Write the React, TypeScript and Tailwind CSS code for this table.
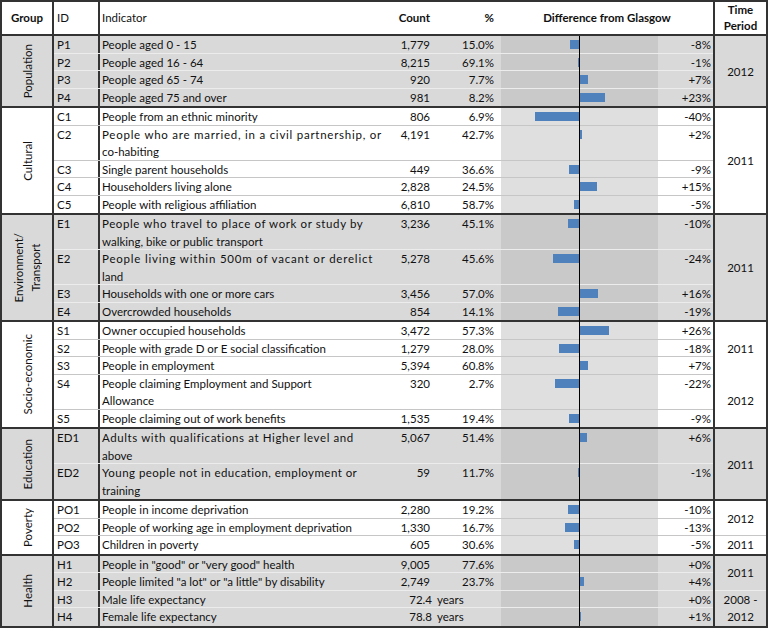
type Row = {
  id: string;
  label: string[];
  count: string;
  pct: string;
  diff: number;
  years?: boolean;
  spread?: string;
};

type Period = { text: string[]; grow: string; line?: boolean };

type Group = { name: string[]; shade: boolean; rows: Row[]; periods: Period[] };

const groups: Group[] = [
  {
    name: ["Population"],
    shade: true,
    rows: [
      { id: "P1", label: ["People aged 0 - 15"], count: "1,779", pct: "15.0%", diff: -8 },
      { id: "P2", label: ["People aged 16 - 64"], count: "8,215", pct: "69.1%", diff: -1 },
      { id: "P3", label: ["People aged 65 - 74"], count: "920", pct: "7.7%", diff: 7 },
      { id: "P4", label: ["People aged 75 and over"], count: "981", pct: "8.2%", diff: 23 },
    ],
    periods: [{ text: ["2012"], grow: "flex-[1]" }],
  },
  {
    name: ["Cultural"],
    shade: false,
    rows: [
      { id: "C1", label: ["People from an ethnic minority"], count: "806", pct: "6.9%", diff: -40 },
      {
        id: "C2",
        label: ["People who are married, in a civil partnership, or", "co-habiting"],
        count: "4,191",
        pct: "42.7%",
        diff: 2,
        spread: "tracking-[0.75px]",
      },
      { id: "C3", label: ["Single parent households"], count: "449", pct: "36.6%", diff: -9 },
      { id: "C4", label: ["Householders living alone"], count: "2,828", pct: "24.5%", diff: 15 },
      { id: "C5", label: ["People with religious affiliation"], count: "6,810", pct: "58.7%", diff: -5 },
    ],
    periods: [{ text: ["2011"], grow: "flex-[1]" }],
  },
  {
    name: ["Environment/", "Transport"],
    shade: true,
    rows: [
      {
        id: "E1",
        label: ["People who travel to place of work or study by", "walking, bike or public transport"],
        count: "3,236",
        pct: "45.1%",
        diff: -10,
        spread: "tracking-[0.6px]",
      },
      {
        id: "E2",
        label: ["People living within 500m of vacant or derelict", "land"],
        count: "5,278",
        pct: "45.6%",
        diff: -24,
        spread: "tracking-[0.8px]",
      },
      { id: "E3", label: ["Households with one or more cars"], count: "3,456", pct: "57.0%", diff: 16 },
      { id: "E4", label: ["Overcrowded households"], count: "854", pct: "14.1%", diff: -19 },
    ],
    periods: [{ text: ["2011"], grow: "flex-[1]" }],
  },
  {
    name: ["Socio-economic"],
    shade: false,
    rows: [
      { id: "S1", label: ["Owner occupied households"], count: "3,472", pct: "57.3%", diff: 26 },
      {
        id: "S2",
        label: ["People with grade D or E social classification"],
        count: "1,279",
        pct: "28.0%",
        diff: -18,
      },
      { id: "S3", label: ["People in employment"], count: "5,394", pct: "60.8%", diff: 7 },
      {
        id: "S4",
        label: ["People claiming Employment and Support", "Allowance"],
        count: "320",
        pct: "2.7%",
        diff: -22,
      },
      { id: "S5", label: ["People claiming out of work benefits"], count: "1,535", pct: "19.4%", diff: -9 },
    ],
    periods: [
      { text: ["2011"], grow: "flex-[3]" },
      { text: ["2012"], grow: "flex-[3]" },
    ],
  },
  {
    name: ["Education"],
    shade: true,
    rows: [
      {
        id: "ED1",
        label: ["Adults with qualifications at Higher level and", "above"],
        count: "5,067",
        pct: "51.4%",
        diff: 6,
        spread: "tracking-[0.6px]",
      },
      {
        id: "ED2",
        label: ["Young people not in education, employment or", "training"],
        count: "59",
        pct: "11.7%",
        diff: -1,
        spread: "tracking-[0.45px]",
      },
    ],
    periods: [{ text: ["2011"], grow: "flex-[1]" }],
  },
  {
    name: ["Poverty"],
    shade: false,
    rows: [
      { id: "PO1", label: ["People in income deprivation"], count: "2,280", pct: "19.2%", diff: -10 },
      {
        id: "PO2",
        label: ["People of working age in employment deprivation"],
        count: "1,330",
        pct: "16.7%",
        diff: -13,
      },
      { id: "PO3", label: ["Children in poverty"], count: "605", pct: "30.6%", diff: -5 },
    ],
    periods: [
      { text: ["2012"], grow: "flex-[2]", line: true },
      { text: ["2011"], grow: "flex-[1]" },
    ],
  },
  {
    name: ["Health"],
    shade: true,
    rows: [
      { id: "H1", label: ['People in "good" or "very good" health'], count: "9,005", pct: "77.6%", diff: 0 },
      {
        id: "H2",
        label: ['People limited "a lot" or "a little" by disability'],
        count: "2,749",
        pct: "23.7%",
        diff: 4,
      },
      { id: "H3", label: ["Male life expectancy"], count: "72.4", pct: "years", diff: 0, years: true },
      { id: "H4", label: ["Female life expectancy"], count: "78.8", pct: "years", diff: 1, years: true },
    ],
    periods: [
      { text: ["2011"], grow: "flex-[2]", line: true },
      { text: ["2008 -", "2012"], grow: "flex-[2]" },
    ],
  },
];

function formatDiff(v: number) {
  return v < 0 ? `${v}%` : `+${v}%`;
}

function IndicatorRow({ row, shade, last }: { row: Row; shade: boolean; last: boolean }) {
  const double = row.label.length > 1;
  const barWidth = Math.abs(row.diff) * 1.1;
  const separator = last ? "" : shade ? "border-b border-[#ececec]" : "border-b border-[#c6c6c6]";

  return (
    <div className={`flex ${double ? "h-[35px]" : "h-[17.5px]"} ${separator} leading-[17.5px]`}>
      <div className="w-[46px] shrink-0 border-r-2 border-[#333] pl-[3px]">{row.id}</div>
      <div className="w-[285px] shrink-0 whitespace-nowrap pl-[2px]">
        {/* wrapped cells run their first line wider, as in the sheet */}
        {row.label.map((line, i) => (
          <div key={line} className={i === 0 && row.spread ? row.spread : ""}>
            {line}
          </div>
        ))}
      </div>
      <div className={`w-[49px] shrink-0 text-right ${row.years ? "pr-[2px]" : "pr-[4px]"}`}>{row.count}</div>
      <div className={`w-[67px] shrink-0 ${row.years ? "pl-[3px] text-left" : "pr-[7px] text-right"}`}>
        {row.pct}
      </div>
      <div className={`flex w-[157px] shrink-0 ${shade ? "bg-[#c9c9c9]" : "bg-[#dfdfdf]"}`}>
        <div className="flex w-[78px] items-start justify-end pt-[4px]">
          {row.diff < 0 && <div className="h-[9px] bg-[#4f81bd]" style={{ width: barWidth }} />}
        </div>
        <div className="flex flex-1 items-start pl-px pt-[4px]">
          {row.diff > 0 && <div className="h-[9px] bg-[#4f81bd]" style={{ width: barWidth }} />}
        </div>
      </div>
      <div className="w-[55px] shrink-0 pr-[2px] text-right">{formatDiff(row.diff)}</div>
    </div>
  );
}

function GroupBlock({ group, first }: { group: Group; first: boolean }) {
  const bg = group.shade ? "bg-[#d9d9d9]" : "bg-white";
  return (
    <div className={`flex ${bg} ${first ? "" : "border-t-2 border-[#333]"}`}>
      {/* rotated group label */}
      <div className="flex w-[52px] shrink-0 items-center justify-center border-r-2 border-[#333]">
        <div className="rotate-180 whitespace-nowrap text-center leading-[17px] [writing-mode:vertical-rl]">
          {group.name.map((line) => (
            <div key={line}>{line}</div>
          ))}
        </div>
      </div>

      <div className="flex w-[659px] shrink-0 flex-col">
        {group.rows.map((row, i) => (
          <IndicatorRow key={row.id} row={row} shade={group.shade} last={i === group.rows.length - 1} />
        ))}
      </div>

      {/* time period cells */}
      <div className="flex w-[53px] shrink-0 flex-col border-l-2 border-[#333]">
        {group.periods.map((p) => (
          <div
            key={p.text.join("")}
            className={`flex ${p.grow} items-center justify-center text-center leading-[17px] ${
              p.line ? (group.shade ? "border-b border-[#ececec]" : "border-b border-[#c6c6c6]") : ""
            }`}
          >
            <div>
              {p.text.map((t) => (
                <div key={t}>{t}</div>
              ))}
            </div>
          </div>
        ))}
      </div>
    </div>
  );
}

export default function App() {
  return (
    <div className="w-[768px] border-2 border-[#333] bg-white font-[Lato,sans-serif] text-[11.5px] text-[#111]">
      {/* Header */}
      <div className="flex h-[34px] border-b-2 border-[#333]">
        <div className="flex w-[52px] shrink-0 items-center justify-center border-r-2 border-[#333] font-bold">
          Group
        </div>
        <div className="flex w-[46px] shrink-0 items-center border-r-2 border-[#333] pl-[3px]">ID</div>
        <div className="flex w-[285px] shrink-0 items-center pl-[2px]">Indicator</div>
        <div className="flex w-[49px] shrink-0 items-center justify-end pr-[4px] font-bold">Count</div>
        <div className="flex w-[67px] shrink-0 items-center justify-end pr-[7px] font-bold">%</div>
        <div className="flex w-[212px] shrink-0 items-center justify-center font-bold">Difference from Glasgow</div>
        <div className="flex w-[53px] shrink-0 flex-col items-center justify-center border-l-2 border-[#333] font-bold leading-[16px]">
          <span>Time</span>
          <span>Period</span>
        </div>
      </div>

      {/* Body */}
      <div className="relative">
        {groups.map((g, i) => (
          <GroupBlock key={g.name.join("")} group={g} first={i === 0} />
        ))}
        {/* zero line of the difference chart */}
        <div className="pointer-events-none absolute inset-y-0 left-[577px] w-px bg-black" />
      </div>
    </div>
  );
}
